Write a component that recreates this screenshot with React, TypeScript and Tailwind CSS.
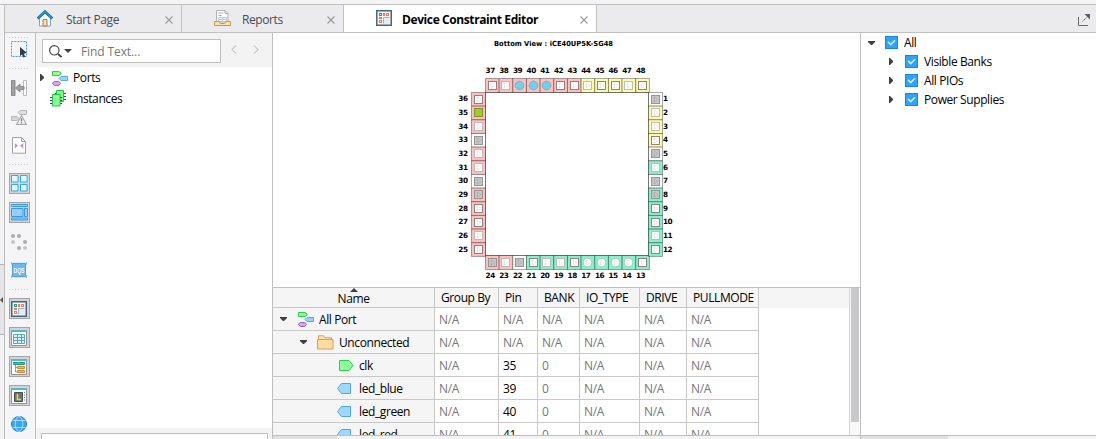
import React from "react";

type IconProps = { className?: string };

const PortsIcon = ({ className = "" }: IconProps) => (
  <svg width="16" height="16" viewBox="0 0 16 16" className={`shrink-0 ${className}`}>
    <path d="M.5 1.500h6.500l2 1.500v1l-2 1.500H.5z" fill="#96fb96" stroke="#2bd251" />
    <path d="M9 6.500h6.500v4H9L7 8.500z" fill="#99d2fb" stroke="#55a9ec" />
    <path d="M2.500 11.500h4l2 1.500v.5l-2 2h-4l-2-2V13z" fill="#d5a6f7" stroke="#9a5fd0" />
  </svg>
);

const InstancesIcon = () => (
  <svg width="17" height="17" viewBox="0 0 17 17" className="shrink-0">
    <path d="M5 3.500h11M5 6.500h11M5 9.500h11" stroke="#444" />
    <path d="M6.500.5h7v11h-7z" fill="#7df78c" stroke="#21c540" />
    <path d="M0 7.500h12M0 10.500h12M0 13.500h12" stroke="#444" />
    <path d="M2.500 4.500h7.500v11.500H2.500z" fill="#8bff98" stroke="#21c540" />
  </svg>
);

const EditorIcon = ({ className = "" }: IconProps) => (
  <svg width="16" height="16" viewBox="0 0 16 16" className={`shrink-0 ${className}`}>
    <path d="M.75.75h14.500v14.500H.75z" fill="#f2f5f6" stroke="#456882" strokeWidth="1.500" />
    <path d="M3 3h3v3H3z" fill="#18a689" />
    <path d="M7 3h2v3H7zM10 3h3v3h-3zM3 7h3v2H3zM3 10h3v3H3z" fill="#f07a60" />
    <path d="M4 4h1v1H4zM11 4h1v1h-1zM4 11h1v1H4z" fill="#fff" />
    <path d="M7.500 13.500v-6h6" fill="none" stroke="#9eb5cd" />
    <path d="M8 8h5.500v5.500H8z" fill="#e4ebf2" />
  </svg>
);

const HomeIcon = () => (
  <svg width="16" height="17" viewBox="0 0 16 17" className="shrink-0">
    <path d="M2.500 7v9h11V7L8 2.500z" fill="#fff" stroke="#7aa7c0" />
    <path d="M6 16V9.500h4V16z" fill="#f8dfba" stroke="#ad7b3e" />
    <path d="M.7 8.500 8 1.700l7.300 6.800" fill="none" stroke="#17679d" strokeWidth="2.800" />
    <path d="M1 8 8 1.500 15 8" fill="none" stroke="#1e98e0" strokeWidth="1.500" />
  </svg>
);

const ReportsIcon = () => (
  <svg width="17" height="17" viewBox="0 0 17 17" className="shrink-0">
    <path d="M2.500.5h8.500l3 3V12H2.500z" fill="#fff" stroke="#b1b1b1" />
    <path d="M11 .5v3h3" fill="none" stroke="#aaa" />
    <path d="M4.500 3h5M4.500 5.500h3" stroke="#aaa" />
    <path d="M4.500 7.500h8v4h-8zM4.500 9.500h8M8.500 7.500v4" fill="none" stroke="#b8ccd9" />
    <path d="M.5 11.500h5l1 2h4l1-2h5v4H.5z" fill="#ffdfa3" stroke="#d4954a" />
  </svg>
);

const SelectIcon = () => (
  <svg width="16" height="17" viewBox="0 0 16 17">
    <path d="M.5.500h15v15H.5z" fill="none" stroke="#4c9fe0" strokeDasharray="2 1" />
    <path d="M9 6v9l2-1.500 1.500 3 1.700-.8-1.400-2.900L16 12z" fill="#303a49" />
  </svg>
);

const AlignIcon = () => (
  <svg width="16" height="16" viewBox="0 0 16 16">
    <path d="M.5.5h3.500v15H.5z" fill="#a0a0a0" stroke="#8b8b8b" />
    <path d="M12.500.5h3v15h-3z" fill="#fff" stroke="#bababa" />
    <path d="M4.500 8 9 4v2.500h4v3H9V12z" fill="#a0a0a0" stroke="#8b8b8b" />
  </svg>
);

const WarningPortsIcon = () => (
  <svg width="16" height="16" viewBox="0 0 16 16">
    <path d="M9 1.500h6.500v4H9L7 3.500z" fill="#dedede" stroke="#b7b7b7" />
    <path d="M.5 7.500H6l2 2-2 2H.5z" fill="#d6d6d6" stroke="#b7b7b7" />
    <path d="M10.500 6.500 5.700 15.400h9.600z" fill="#fafafa" stroke="#aaa" strokeWidth="1.200" />
    <path d="M10.500 9.300v3.200M10.500 13.200v1.300" stroke="#777" strokeWidth="1.300" />
  </svg>
);

const DocIcon = () => (
  <svg width="14" height="17" viewBox="0 0 14 17">
    <path d="M.5.500h9l4 4v11.700H.5z" fill="#fff" stroke="#a0a0a0" />
    <path d="M9.500.5v4h4" fill="none" stroke="#a0a0a0" />
    <path d="M2.800 6v5.500l3.200-2.700zM11.200 6v5.500L8 8.800z" fill="#c28bdd" />
  </svg>
);

const FourIcon = () => (
  <svg width="17" height="17" viewBox="0 0 17 17">
    <path d="M.5.5h6.500v6.500H.5zM9.500.5H16v6.500H9.500zM.5 9.500h6.500V16H.5zM9.500 9.500H16V16H9.500z" fill="#e4f6ff" stroke="#2eaded" />
  </svg>
);

const PanelsIcon = () => (
  <svg width="17" height="17" viewBox="0 0 17 17">
    <path d="M.5.5h16v2H.5zM.5 4.500h11.500v8H.5zM13.500 4.500h3v8h-3zM.5 14h16v2H.5z" fill="#98cef5" stroke="#3f98df" />
  </svg>
);

const DotsIcon = () => (
  <svg width="16" height="16" viewBox="0 0 16 16">
    <g fill="#adadad">
      <circle cx="2" cy="2" r="2" />
      <circle cx="8" cy="2" r="2" />
      <circle cx="14" cy="8" r="2" />
      <circle cx="8" cy="14" r="2" />
    </g>
    <g fill="#c6c6c6">
      <circle cx="2" cy="8" r="2" />
      <circle cx="14" cy="14" r="2" />
    </g>
  </svg>
);

const DqsIcon = () => (
  <svg width="16" height="16" viewBox="0 0 16 16" className="-mt-px overflow-visible">
    <path d="M.5 0v2.500h15V0M.5 16v-2.500h15V16" fill="#d7ecfb" stroke="#82c3ef" />
    <path d="M1.500 1.500h13v13h-13z" fill="#6eb6ee" stroke="#4da3e5" />
    <text x="8" y="11" textAnchor="middle" textLength="11" lengthAdjust="spacingAndGlyphs" className="fill-white font-['Liberation_Sans',sans-serif] text-[8px] font-bold tracking-normal">DQS</text>
  </svg>
);

const GridIcon = () => (
  <svg width="16" height="16" viewBox="0 0 16 16">
    <path d="M.5.5h15v15H.5z" fill="#fff" stroke="#929292" />
    <path d="M0 0h16v2H0z" fill="#58b5cb" />
    <path d="M2.500 4.500h11v9h-11zM2.500 7.500h11M2.500 10.500h11M6.500 4.500v9M10.500 4.500v9" fill="#e0f2f8" stroke="#52abc5" />
  </svg>
);

const ListIcon = () => (
  <svg width="16" height="16" viewBox="0 0 16 16">
    <path d="M.5.5h15v15H.5z" fill="#fff" stroke="#929292" />
    <path d="M0 0h16v2H0z" fill="#58b5cb" />
    <path d="M2.500 3.500h11v2h-11z" fill="#39c9ae" stroke="#189d84" />
    <path d="M4.500 6v7H7M4.500 8.500H7" fill="none" stroke="#999" />
    <path d="M6.500 7.500h7v2h-7zM6.500 11.500h7v2h-7z" fill="#f2b366" stroke="#d68b38" />
  </svg>
);

const LIcon = () => (
  <svg width="16" height="16" viewBox="0 0 16 16">
    <path d="M.5.5h15v15H.5z" fill="#fff" stroke="#929292" />
    <path d="M0 0h16v2H0z" fill="#58b5cb" />
    <path d="M3.500 4.500h8v9h-8z" fill="#66758a" stroke="#3d4e64" />
    <path d="M6.500 6v5.500H10" fill="none" stroke="#ffdd00" strokeWidth="1.600" />
    <path d="M13.500 4v9" stroke="#777" strokeDasharray="1 1.500" />
  </svg>
);

const GlobeIcon = () => (
  <svg width="16" height="16" viewBox="0 0 16 16" className="-mt-px">
    <circle cx="8" cy="8" r="7.500" fill="#36a7f5" stroke="#2380d2" />
    <ellipse cx="8" cy="8" rx="3.800" ry="7.500" fill="none" stroke="#a9ddfc" />
    <path d="M1.500 4.500h13M1.500 11.500h13" stroke="#a9ddfc" />
  </svg>
);

const FolderIcon = () => (
  <svg width="17" height="15" viewBox="0 0 17 15" className="shrink-0">
    <path d="M1.500 4V.800h5l1.500 2h6.500V5" fill="#ffe5bd" stroke="#dc9d5b" />
    <path d="M.5 4.500h15.500v9.500H.5z" fill="#ffdc9f" stroke="#dc9d5b" />
  </svg>
);

const InPort = () => (
  <svg width="15" height="11" viewBox="0 0 15 11" className="shrink-0">
    <path d="M.5.5H10l4 5-4 5H.5z" fill="#92fb9b" stroke="#27cf4a" />
  </svg>
);

const OutPort = () => (
  <svg width="14" height="11" viewBox="0 0 14 11" className="shrink-0">
    <path d="M13.500.5H4.500l-4 5 4 5h9z" fill="#a0d7fb" stroke="#4ea6ec" />
  </svg>
);

const Close = () => (
  <svg width="8" height="8" viewBox="0 0 8 8" className="mt-[2px] shrink-0">
    <path d="M.5.5l7 7M7.500.5l-7 7" stroke="#999" strokeWidth="1.100" />
  </svg>
);

const Down = () => (
  <svg width="7" height="4" viewBox="0 0 7 4" className="shrink-0">
    <path d="M0 0h7v1L4 4H3L0 1z" fill="#404040" />
  </svg>
);

const Right = () => (
  <svg width="4" height="7" viewBox="0 0 4 7" className="shrink-0">
    <path d="M0 0h1l3 3v1L1 7H0z" fill="#404040" />
  </svg>
);

const Dotted = ({ className = "" }: IconProps) => (
  <div className={`flex w-full shrink-0 justify-center ${className}`}>
    <svg width="20" height="1">
      <path d="M0 .5h20" stroke="#cfcfcf" strokeDasharray="1 2" />
    </svg>
  </div>
);

const Tool = ({ children, on = false }: { children: React.ReactNode; on?: boolean }) => (
  <div className="flex h-[29px] w-full shrink-0 items-center justify-center">
    <div className={on ? "flex h-[21px] w-[21px] items-center justify-center border border-[#a5a5a5] bg-[#d4d4d6]" : "flex h-[21px] w-[21px] items-center justify-center"}>
      {children}
    </div>
  </div>
);

const PINK = "#ffbfbf";
const YELLOW = "#fdfbab";
const TEAL = "#87f0cc";
const WHITE = "#ffffff";

type Pin = { n: number; bank: string; kind: "dark" | "light" | "gray" | "green" | "blue" | "circle" };
const pin = (n: number, bank: string, kind: Pin["kind"]): Pin => ({ n, bank, kind });

const topPins: Pin[] = [
  pin(37, PINK, "dark"), pin(38, PINK, "light"), pin(39, PINK, "blue"), pin(40, PINK, "blue"),
  pin(41, PINK, "blue"), pin(42, PINK, "dark"), pin(43, PINK, "dark"), pin(44, YELLOW, "light"),
  pin(45, YELLOW, "dark"), pin(46, YELLOW, "dark"), pin(47, YELLOW, "light"), pin(48, YELLOW, "dark"),
];
const leftPins: Pin[] = [
  pin(36, PINK, "dark"), pin(35, PINK, "green"), pin(34, PINK, "light"), pin(33, WHITE, "gray"),
  pin(32, PINK, "light"), pin(31, PINK, "light"), pin(30, WHITE, "gray"), pin(29, PINK, "gray"),
  pin(28, PINK, "dark"), pin(27, PINK, "dark"), pin(26, PINK, "light"), pin(25, PINK, "dark"),
];
const bottomPins: Pin[] = [
  pin(24, PINK, "gray"), pin(23, PINK, "light"), pin(22, WHITE, "gray"), pin(21, TEAL, "dark"),
  pin(20, TEAL, "light"), pin(19, TEAL, "light"), pin(18, TEAL, "dark"), pin(17, TEAL, "circle"),
  pin(16, TEAL, "circle"), pin(15, TEAL, "circle"), pin(14, TEAL, "circle"), pin(13, TEAL, "dark"),
];
const rightPins: Pin[] = [
  pin(1, WHITE, "gray"), pin(2, YELLOW, "light"), pin(3, YELLOW, "light"), pin(4, YELLOW, "dark"),
  pin(5, WHITE, "gray"), pin(6, TEAL, "light"), pin(7, WHITE, "gray"), pin(8, TEAL, "gray"),
  pin(9, TEAL, "dark"), pin(10, TEAL, "dark"), pin(11, TEAL, "light"), pin(12, TEAL, "dark"),
];

const STEP = 13.66;

const PinCell = ({ p, x, y, w, h }: { p: Pin; x: number; y: number; w: number; h: number }) => {
  const cx = Math.round(x + w / 2 - 0.5) + 0.5;
  const cy = Math.round(y + h / 2 - 0.5) + 0.5;
  const round = p.kind === "blue" || p.kind === "circle";
  const fill = p.kind === "gray" ? "#c6c6c6" : p.kind === "green" ? "#a4c63d" : "#fff";
  const stroke = p.kind === "gray" ? "#959595" : p.kind === "green" ? "#789a25" : p.kind === "dark" ? "#8c8484" : "#c0baba";
  return (
    <g>
      <rect x={x} y={y} width={w} height={h} fill={p.bank} stroke="#000" strokeOpacity="0.34" />
      {round ? (
        <circle cx={cx} cy={cy} r="4.300" fill={p.kind === "blue" ? "#74d0ea" : "#fff"} stroke={p.kind === "blue" ? "#65acc4" : "#a6bdb3"} strokeWidth="0.8" />
      ) : (
        <rect x={cx - 4} y={cy - 4} width="8" height="8" fill={fill} stroke={stroke} />
      )}
      {p.kind !== "blue" && p.kind !== "green" && (
        <path
          d={`M${cx - 2.5} ${cy - 1.5}h2M${cx - 2.5} ${cy + 1.5}h2M${cx - 1} ${cy - 2.5}v5l3.500-2.500z`}
          fill="none"
          stroke={p.kind === "gray" ? "#aaaaaa" : "#dedede"}
          strokeWidth="0.6"
        />
      )}
    </g>
  );
};

const ChipView = () => (
  <svg width="587" height="254" viewBox="273 33 587 254" className="block shrink-0 font-['DejaVu_Sans',sans-serif] text-[7.300px] font-bold tracking-[-0.5px]">
    <text x="494" y="46" textLength="119" lengthAdjust="spacingAndGlyphs" className="text-[7px] tracking-normal">Bottom View : iCE40UP5K-SG48</text>
    {topPins.map((p, i) => (
      <g key={p.n}>
        <PinCell p={p} x={485.5 + i * STEP} y={78.5} w={STEP} h={14} />
        <text x={490.2 + i * STEP} y="73" textAnchor="middle">{p.n}</text>
      </g>
    ))}
    {bottomPins.map((p, i) => (
      <g key={p.n}>
        <PinCell p={p} x={485.5 + i * STEP} y={255.5} w={STEP} h={14} />
        <text x={490.2 + i * STEP} y="278" textAnchor="middle">{p.n}</text>
      </g>
    ))}
    {leftPins.map((p, i) => (
      <g key={p.n}>
        <PinCell p={p} x={471.5} y={92.5 + i * STEP} w={14} h={STEP} />
        <text x="467.500" y={101.3 + i * STEP} textAnchor="end">{p.n}</text>
      </g>
    ))}
    {rightPins.map((p, i) => (
      <g key={p.n}>
        <PinCell p={p} x={648.5} y={92.5 + i * STEP} w={14} h={STEP} />
        <text x="663" y={101.3 + i * STEP}>{p.n}</text>
      </g>
    ))}
    <path d="M485.500 92.500h163v163h-163z" fill="none" stroke="#000" strokeOpacity="0.3" />
  </svg>
);

const Check = () => (
  <span className="flex h-[13px] w-[13px] shrink-0 items-center justify-center border border-[#1888dc] bg-[#2ea3fa]">
    <svg width="9" height="7" viewBox="0 0 9 7">
      <path d="M1 2.800 3.800 5.500 8 1.200" fill="none" stroke="#d5eeff" strokeWidth="1.600" />
    </svg>
  </span>
);

const rows = [
  { name: "All Port", level: 0, pin: "N/A", bank: "N/A" },
  { name: "Unconnected", level: 1, pin: "N/A", bank: "N/A" },
  { name: "clk", level: 2, pin: "35", bank: "0" },
  { name: "led_blue", level: 3, pin: "39", bank: "0" },
  { name: "led_green", level: 3, pin: "40", bank: "0" },
  { name: "led_red", level: 3, pin: "41", bank: "0" },
];

const headers = ["Group By", "Pin", "BANK", "IO_TYPE", "DRIVE", "PULLMODE"];
const COLS = "grid grid-cols-[162px_64px_39px_42px_60px_47px_72px]";

const NameCell = ({ name, level }: { name: string; level: number }) => (
  <div className="flex items-center border-r border-[#c8c8c8] bg-[#f5f5f5]">
    {level === 0 && <><span className="w-[7px]" /><Down /><span className="w-[11px]" /><PortsIcon /><span className="w-[5px]" /></>}
    {level === 1 && <><span className="w-[27px]" /><Down /><span className="w-[10px]" /><FolderIcon /><span className="w-[5px]" /></>}
    {level === 2 && <><span className="w-[66px]" /><InPort /><span className="w-[5px]" /></>}
    {level === 3 && <><span className="w-[64px]" /><OutPort /><span className="w-[8px]" /></>}
    <span className="pt-[2px]">{name}</span>
  </div>
);

export default function App() {
  return (
    <div className="flex h-[439px] w-[1096px] flex-col overflow-hidden whitespace-nowrap bg-[#f3f3f3] font-['Open_Sans',sans-serif] text-[12px] leading-4 tracking-[-0.4px] text-black">
      <div className="h-[5px] shrink-0 border-b border-[#bfbfbf]" />
      <div className="flex min-h-0 flex-1">
        <aside className="flex w-1 shrink-0 flex-col pt-[259px]">
          <div className="flex h-[71px] items-center border-y border-[#b5b5b5] bg-[#e6e6e8]">
            <svg width="3" height="6"><path d="M3 0v6L0 3z" fill="#555" /></svg>
          </div>
        </aside>
        <div className="flex min-w-0 flex-1 flex-col border-l border-[#bdbdbd]">
          <nav className="flex h-7 shrink-0 border-b border-[#c0c0c0] bg-[#ebebed] text-[#4c4c57]">
            <div className="flex w-[177px] items-center border-r border-[#c0c0c0] pl-8 pr-2">
              <HomeIcon /><span className="ml-[13px] pt-[2px]">Start Page</span><span className="ml-auto"><Close /></span>
            </div>
            <div className="flex w-[162px] items-center border-r border-[#c0c0c0] pl-8 pr-2">
              <ReportsIcon /><span className="ml-[11px] pt-[2px]">Reports</span><span className="ml-auto"><Close /></span>
            </div>
            <div className="flex w-[253px] items-center border-r border-[#c0c0c0] bg-white pl-8 pr-2 font-bold text-black">
              <EditorIcon className="-mt-px" /><span className="ml-[10px] pt-[2px]">Device Constraint Editor</span><span className="ml-auto"><Close /></span>
            </div>
            <div className="flex flex-1 items-center justify-end pr-[5px] pt-[2px]">
              <svg width="13" height="13" viewBox="0 0 13 13">
                <path d="M.5 4v8.500H10" fill="none" stroke="#666570" />
                <path d="M4.500 8.500 10 3" stroke="#666570" strokeDasharray="1.500 .6" />
                <path d="M6.500 1H12v5.500z" fill="#5a5964" />
              </svg>
            </div>
          </nav>

          <div className="flex min-h-0 flex-1">
            <div className="flex w-[31px] shrink-0 flex-col border-r border-[#bfbfbf] bg-[#f5f5f7] pr-[2px]">
              <Dotted className="h-2 pt-1" />
              <div className="flex h-[17px] shrink-0 justify-center"><SelectIcon /></div>
              <Dotted className="h-[15px] pt-[10px]" />
              <Tool><AlignIcon /></Tool>
              <Tool><WarningPortsIcon /></Tool>
              <Tool><DocIcon /></Tool>
              <Dotted className="h-[9px] pt-1" />
              <Tool on><FourIcon /></Tool>
              <Tool on><PanelsIcon /></Tool>
              <Tool><DotsIcon /></Tool>
              <Tool><DqsIcon /></Tool>
              <Dotted className="h-[9px] pt-1" />
              <Tool on><EditorIcon /></Tool>
              <Tool on><GridIcon /></Tool>
              <Tool on><ListIcon /></Tool>
              <Tool on><LIcon /></Tool>
              <Tool><GlobeIcon /></Tool>
            </div>

            <section className="flex w-[237px] shrink-0 flex-col border-r border-[#bfbfbf] bg-white">
              <div className="flex h-[34px] shrink-0 items-start bg-[#f3f3f3] pl-[6px] pt-[6px]">
                <div className="flex h-6 w-[179px] items-center border border-[#bfbfbf] bg-white pl-[6px] text-[#777]">
                  <svg width="13" height="13" viewBox="0 0 13 13">
                    <circle cx="5.300" cy="5.300" r="4.700" fill="none" stroke="#484848" strokeWidth="1.200" />
                    <path d="m9 9 3.500 3" stroke="#404040" strokeWidth="1.700" />
                  </svg>
                  <span className="ml-[2px] mr-[9px]"><svg width="8" height="4"><path d="M0 0h8L4 4z" fill="#404040" /></svg></span>
                  <span className="pt-[2px] tracking-[-0.1px]">Find Text...</span>
                </div>
                <svg width="28" height="9" viewBox="0 0 28 9" className="ml-[10px] mt-[6px]">
                  <path d="M5 .5 1 4.500l4 4M23 .5l4 4-4 4" fill="none" stroke="#cacaca" strokeWidth="1.100" />
                </svg>
              </div>
              <div className="flex h-[21px] shrink-0 items-center pl-1"><Right /><PortsIcon className="ml-2" /><span className="ml-[5px] pt-px">Ports</span></div>
              <div className="flex h-5 shrink-0 items-center pl-[14px]"><InstancesIcon /><span className="ml-[6px] pt-px">Instances</span></div>
              <div className="mt-auto flex h-[11px] shrink-0 items-end bg-[#f3f3f3] pl-[5px]">
                <div className="h-[6px] w-[227px] border border-b-0 border-[#bfbfbf] bg-white" />
              </div>
            </section>

            <main className="flex w-[588px] shrink-0 flex-col border-r border-[#bfbfbf] bg-white">
              <ChipView />
              <div className="flex h-[149px] shrink-0 overflow-hidden border-y border-[#bfbfbf]">
                <div className="min-w-0 flex-1">
                  <div className="h-[20px] bg-[#f5f5f5]">
                    <div className={`${COLS} h-[20px] w-[486px] border-b border-[#c8c8c8]`}>
                      <div className="flex flex-col items-center border-r border-[#c8c8c8]">
                        <svg width="8" height="4" className="shrink-0"><path d="M0 4h8L4 0z" fill="#404040" /></svg>
                        <span className="-mt-px">Name</span>
                      </div>
                      {headers.map((h) => (
                        <div key={h} className="flex items-center border-r border-[#c8c8c8] pl-[6px]">
                          <span className="pt-px">{h}</span>
                        </div>
                      ))}
                    </div>
                  </div>
                  {rows.map((r) => (
                    <div key={r.name} className={`${COLS} h-[23px] w-[486px] border-b border-[#c8c8c8]`}>
                      <NameCell name={r.name} level={r.level} />
                      {["N/A", r.pin, r.bank, "N/A", "N/A", "N/A"].map((v, i) => (
                        <div key={i} className={i === 1 && v !== "N/A" ? "flex items-center border-r border-[#c8c8c8] pl-1 pt-[2px]" : "flex items-center border-r border-[#c8c8c8] pl-1 pt-[2px] text-[#777]"}>
                          {v}
                        </div>
                      ))}
                    </div>
                  ))}
                </div>
                <div className="w-[11px] shrink-0 border-l border-[#d5d5d5] bg-[#f8f8f8] px-[1px]">
                  <div className="h-[134px] bg-[#c9c9cb]" />
                </div>
              </div>
              <div className="h-[3px] bg-[#f3f3f3]"><div className="h-full w-16 bg-[#e0e0e0]" /></div>
            </main>

            <section className="flex min-w-0 flex-1 flex-col bg-white">
              <div className="flex h-[19px] items-center pl-[7px]"><Down /><span className="ml-[10px] mr-[6px] flex"><Check /></span><span className="pt-px">All</span></div>
              {["Visible Banks", "All PIOs", "Power Supplies"].map((t) => (
                <div key={t} className="flex h-[19px] items-center pl-7">
                  <Right /><span className="ml-3 mr-[6px] flex"><Check /></span><span className="pt-px">{t}</span>
                </div>
              ))}
              <div className="mt-auto h-[4px] border-t border-[#bfbfbf] bg-[#f3f3f3]"><div className="h-full w-[87px] bg-[#e0e0e0]" /></div>
            </section>
          </div>
        </div>
      </div>
    </div>
  );
}
